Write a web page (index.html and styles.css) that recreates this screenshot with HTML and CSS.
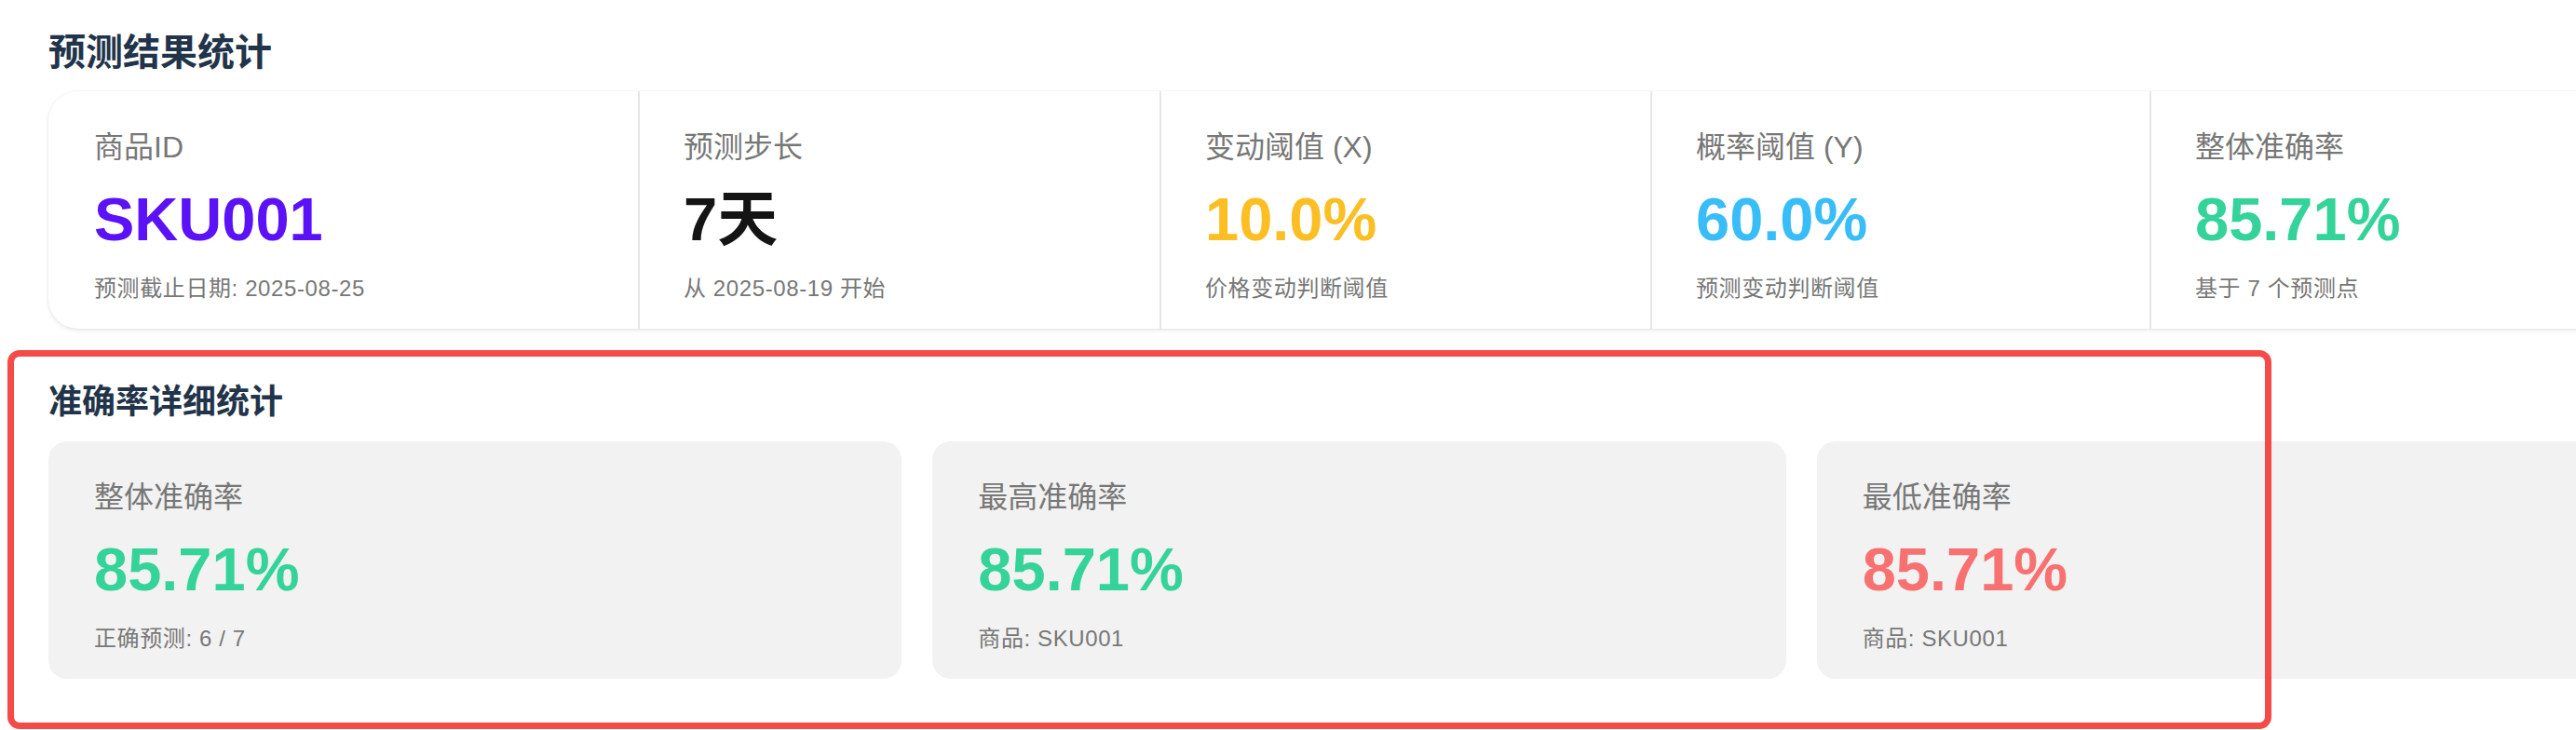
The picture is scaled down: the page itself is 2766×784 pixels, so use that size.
FILE: index.html
```html
<!DOCTYPE html>
<html lang="zh-CN">
<head>
<meta charset="utf-8">
<title>预测结果统计</title>
<link rel="stylesheet" href="styles.css">
</head>
<body>
<div class="page">
  <h2 class="section-title">预测结果统计</h2>
  <div class="summary-card">
    <div class="summary-item">
      <div class="label">商品ID</div>
      <div class="value value-purple">SKU001</div>
      <div class="sub">预测截止日期: 2025-08-25</div>
    </div>
    <div class="summary-item">
      <div class="label">预测步长</div>
      <div class="value value-dark">7天</div>
      <div class="sub">从 2025-08-19 开始</div>
    </div>
    <div class="summary-item">
      <div class="label">变动阈值 (X)</div>
      <div class="value value-yellow">10.0%</div>
      <div class="sub">价格变动判断阈值</div>
    </div>
    <div class="summary-item">
      <div class="label">概率阈值 (Y)</div>
      <div class="value value-blue">60.0%</div>
      <div class="sub">预测变动判断阈值</div>
    </div>
    <div class="summary-item">
      <div class="label">整体准确率</div>
      <div class="value value-green">85.71%</div>
      <div class="sub">基于 7 个预测点</div>
    </div>
  </div>

  <h3 class="section-title section-title-sm">准确率详细统计</h3>
  <div class="acc-grid">
    <div class="acc-card">
      <div class="label">整体准确率</div>
      <div class="value value-green">85.71%</div>
      <div class="sub">正确预测: 6 / 7</div>
    </div>
    <div class="acc-card">
      <div class="label">最高准确率</div>
      <div class="value value-green">85.71%</div>
      <div class="sub">商品: SKU001</div>
    </div>
    <div class="acc-card">
      <div class="label">最低准确率</div>
      <div class="value value-red">85.71%</div>
      <div class="sub">商品: SKU001</div>
    </div>
  </div>

  <div class="highlight"></div>
</div>
</body>
</html>
```

FILE: styles.css
```css
html {
  overflow: hidden;
  background: #ffffff;
}

body {
  margin: 0;
  padding: 0;
  min-height: 784px;
  font-family: "Liberation Sans", "Noto Sans CJK SC", sans-serif;
  color: #333333;
}

.page {
  position: relative;
  width: 2815px;
  min-height: 758px;
  padding: 26px 0 0 52px;
}

.section-title {
  margin: 0 0 12px 0;
  font-size: 40px;
  line-height: 60px;
  font-weight: 700;
  color: #22344a;
}

.section-title-sm {
  margin: 52px 0 15px 0;
  font-size: 36px;
  line-height: 54px;
}

.summary-card {
  display: grid;
  grid-template-columns: 633px 560px 527px 536px 559px;
  background: #ffffff;
  border-radius: 32px;
  box-shadow: 0 2px 5px rgba(0, 0, 0, 0.09), 0 0 0 1px rgba(0, 0, 0, 0.025);
}

.summary-item {
  padding: 36px 46px 25px 47px;
  border-left: 2px solid #e6e6e6;
  min-width: 0;
}

.summary-item:first-child {
  border-left: none;
  padding-left: 49px;
}

.label {
  font-size: 32px;
  line-height: 48px;
  color: #777777;
  white-space: nowrap;
}

.value {
  margin-top: 16px;
  font-size: 65px;
  line-height: 76px;
  font-weight: 700;
  white-space: nowrap;
}

.sub {
  margin-top: 18px;
  font-size: 24px;
  line-height: 36px;
  letter-spacing: 0.6px;
  color: #777777;
  white-space: nowrap;
}

.value-purple { color: #5b12f6; }
.value-dark { color: #141414; }
.value-yellow { color: #fbbf24; }
.value-blue { color: #38bdf8; }
.value-green { color: #34d399; }
.value-red { color: #f87171; }

.acc-grid {
  display: grid;
  grid-template-columns: 1fr 1fr 1fr;
  gap: 33px;
}

.acc-card {
  background: #f2f2f2;
  border-radius: 20px;
  padding: 36px 46px 25px 49px;
}

.highlight {
  position: absolute;
  left: 8px;
  top: 376px;
  width: 2431px;
  height: 407px;
  box-sizing: border-box;
  border: 7px solid #f54b48;
  border-radius: 13px;
  pointer-events: none;
}
```
